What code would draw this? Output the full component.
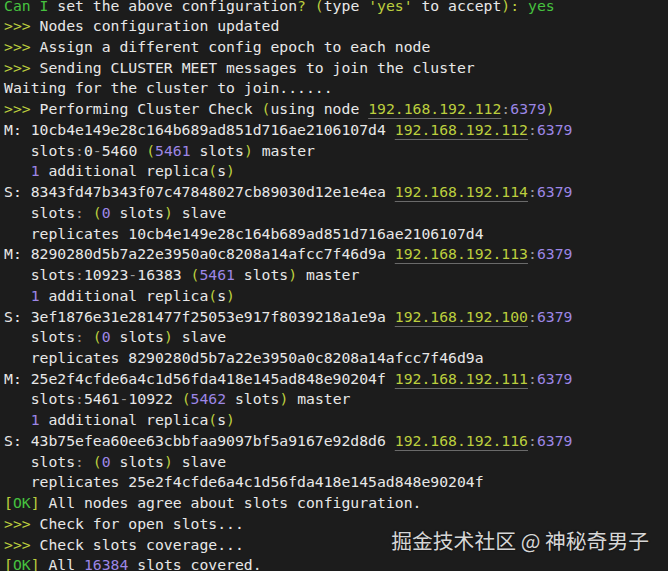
import React from 'react';

const Y = ({ children }: { children: React.ReactNode }) => <span className="text-[#bccf3e]">{children}</span>;
const G = ({ children }: { children: React.ReactNode }) => <span className="text-[#46c23f]">{children}</span>;
const P = ({ children }: { children: React.ReactNode }) => <span className="text-[#9d87e6]">{children}</span>;
const D = ({ children }: { children: React.ReactNode }) => <span className="text-[#9a9a9a]">{children}</span>;

const Addr = ({ ip }: { ip: string }) => (
  <>
    <span className="text-[#bccf3e] underline decoration-[#6a6a6a] underline-offset-[4px]">{ip}</span>
    <D>:</D>
    <P>6379</P>
  </>
);

const Line = ({ children }: { children?: React.ReactNode }) => (
  <div className="whitespace-pre h-[20.74px]">{children}</div>
);

const Node = ({ role, id, ip }: { role: string; id: string; ip: string }) => (
  <Line>
    {role}: {id} <Addr ip={ip} />
  </Line>
);

const Master = ({ range, count }: { range: [string, string]; count: string }) => (
  <Line>
    {'   '}slots<D>:</D>
    {range[0]}
    <D>-</D>
    {range[1]} <Y>(</Y>
    <P>{count}</P> slots<Y>)</Y> master
  </Line>
);

const Replica = () => (
  <Line>
    {'   '}
    <P>1</P> additional replica<Y>(</Y>s<Y>)</Y>
  </Line>
);

const Slave = () => (
  <Line>
    {'   '}slots<D>:</D> <Y>(</Y>
    <P>0</P> slots<Y>)</Y> slave
  </Line>
);

const Step = ({ children }: { children: React.ReactNode }) => (
  <Line>
    <Y>&gt;&gt;&gt;</Y> {children}
  </Line>
);

const Ok = ({ children }: { children: React.ReactNode }) => (
  <Line>
    <Y>[</Y>
    <G>OK</G>
    <Y>]</Y> {children}
  </Line>
);

const groups = [
  {
    m: ['10cb4e149e28c164b689ad851d716ae2106107d4', '192.168.192.112'],
    s: ['8343fd47b343f07c47848027cb89030d12e1e4ea', '192.168.192.114'],
    range: ['0', '5460'] as [string, string],
    count: '5461',
  },
  {
    m: ['8290280d5b7a22e3950a0c8208a14afcc7f46d9a', '192.168.192.113'],
    s: ['3ef1876e31e281477f25053e917f8039218a1e9a', '192.168.192.100'],
    range: ['10923', '16383'] as [string, string],
    count: '5461',
  },
  {
    m: ['25e2f4cfde6a4c1d56fda418e145ad848e90204f', '192.168.192.111'],
    s: ['43b75efea60ee63cbbfaa9097bf5a9167e92d8d6', '192.168.192.116'],
    range: ['5461', '10922'] as [string, string],
    count: '5462',
  },
];

export default function App() {
  return (
    <div className="relative h-[571px] w-[668px] overflow-hidden bg-[#1c1c1c] text-[#e8e8e8] font-['DejaVu_Sans_Mono',monospace] text-[14.75px] leading-[20.74px]">
      <div className="pl-[4px] mt-[-4.5px]">
        <Line>
          <G>Can I</G> set the above configuration<Y>?</Y> <Y>(</Y>type <Y>'yes'</Y> to accept<Y>):</Y> <G>yes</G>
        </Line>
        <Step>Nodes configuration updated</Step>
        <Step>Assign a different config epoch to each node</Step>
        <Step>Sending CLUSTER MEET messages to join the cluster</Step>
        <Line>Waiting for the cluster to join......</Line>
        <Step>
          Performing Cluster Check <Y>(</Y>using node <Addr ip="192.168.192.112" />
          <Y>)</Y>
        </Step>
        {groups.map((g) => (
          <React.Fragment key={g.m[0]}>
            <Node role="M" id={g.m[0]} ip={g.m[1]} />
            <Master range={g.range} count={g.count} />
            <Replica />
            <Node role="S" id={g.s[0]} ip={g.s[1]} />
            <Slave />
            <Line>{'   '}replicates {g.m[0]}</Line>
          </React.Fragment>
        ))}
        <Ok>All nodes agree about slots configuration.</Ok>
        <Step>Check for open slots...</Step>
        <Step>Check slots coverage...</Step>
        <Ok>
          All <P>16384</P> slots covered.
        </Ok>
      </div>

      {/* watermark */}
      <div className="absolute right-[19px] top-[525px] whitespace-pre text-[20.8px] leading-[30px] text-[#d6d6d6] font-['Noto_Sans_CJK_SC','Noto_Sans',sans-serif] [text-shadow:0_0_2px_rgba(0,0,0,0.6)]">
        掘金技术社区 @ 神秘奇男子
      </div>
    </div>
  );
}
